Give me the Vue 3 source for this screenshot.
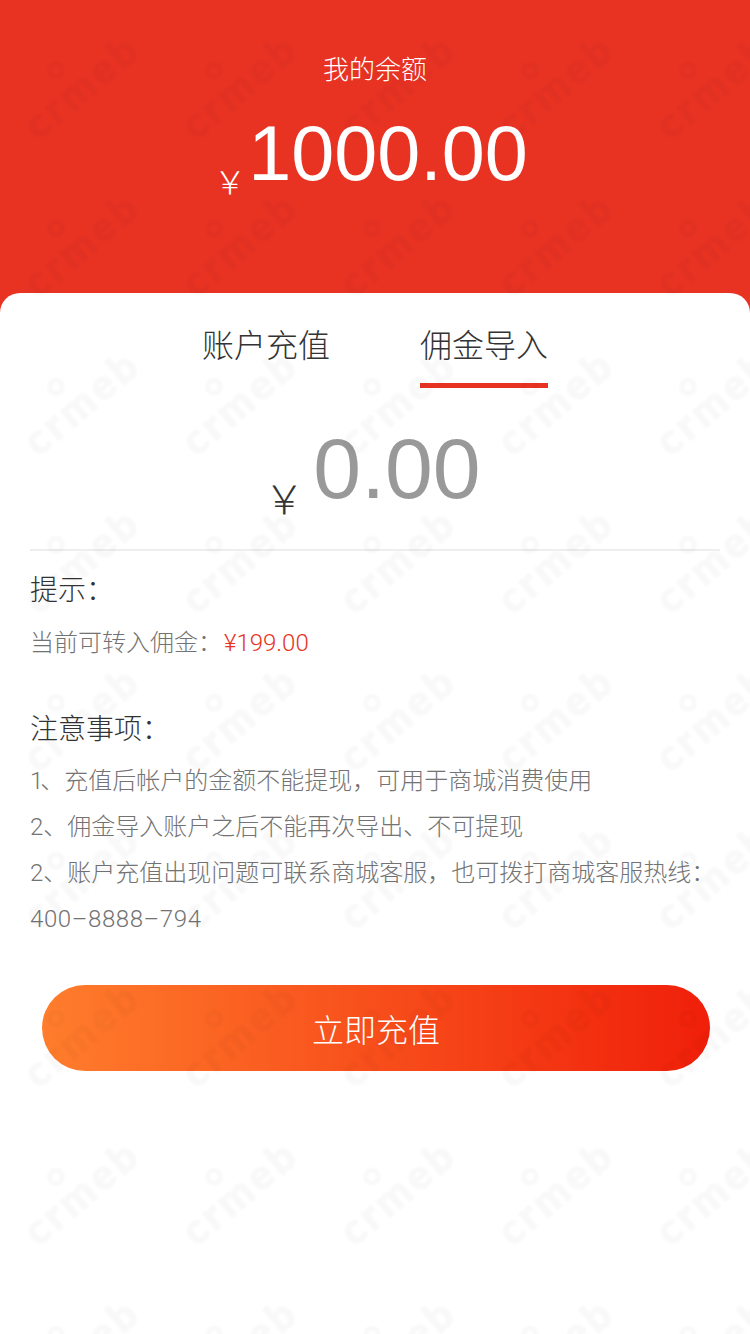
<script setup>
const marks = Array.from({ length: 45 }, (_, i) => i)
</script>

<template>
  <div class="page">
    <header class="hero">
      <div class="hero-label">我的余额</div>
      <div class="hero-amount"><span class="hero-yen">￥</span><span class="hero-num">1000.00</span></div>
    </header>
    <main class="card">
      <nav class="tabs">
        <div class="tab">账户充值</div>
        <div class="tab active">佣金导入</div>
      </nav>
      <div class="amount">
        <span class="amount-yen">￥</span><span class="amount-num">0.00</span>
      </div>
      <section class="tip">
        <h3 class="tip-title">提示：</h3>
        <p class="line">当前可转入佣金：<span class="red">¥199.00</span></p>
      </section>
      <section class="notes">
        <h3 class="tip-title">注意事项：</h3>
        <p class="line"><span class="one">1</span>、充值后帐户的金额不能提现，可用于商城消费使用</p>
        <p class="line">2、佣金导入账户之后不能再次导出、不可提现</p>
        <p class="line">2、账户充值出现问题可联系商城客服，也可拨打商城客服热线：<span class="phone">400–8888–794</span></p>
      </section>
      <button class="submit">立即充值</button>
    </main>
    <div class="wm" aria-hidden="true">
      <div v-for="i in marks" :key="i" class="wm-tile"><span class="wm-text">crmeb<i class="wm-ring"></i></span></div>
    </div>
  </div>
</template>

<style>
html, body { margin: 0; background: #fff; }
</style>

<style scoped>
.page {
  position: relative;
  height: 1334px;
  overflow: hidden;
  background: #e83323;
  font-family: "Liberation Sans", "Noto Sans CJK SC", sans-serif;
  font-weight: 300;
}
.hero { height: 293px; box-sizing: border-box; padding-top: 53px; color: #fff; text-align: center; }
.hero-label { font-size: 26px; line-height: 34px; }
.hero-amount { margin-top: 24px; line-height: 84px; height: 84px; padding-right: 8px; white-space: nowrap; }
.hero-yen { font-size: 32px; margin-right: 2px; vertical-align: -14px; line-height: 1; }
.hero-num { font-size: 77.4px; }
.card {
  height: 1041px;
  background: #fff;
  border-radius: 20px 20px 0 0;
  padding: 0 30px;
  box-sizing: border-box;
}
.tabs { display: flex; justify-content: center; gap: 90px; padding-top: 26px; }
.tab { width: 128px; height: 68px; font-size: 32px; line-height: 54px; color: #333; text-align: center; position: relative; white-space: nowrap; }
.tab.active::after { content: ""; position: absolute; left: 0; right: 0; bottom: -1px; height: 5px; background: #e83323; }
.amount {
  height: 164px;
  box-sizing: border-box;
  border-bottom: 2px solid #eee;
  text-align: center;
  padding: 31px 5px 0 0;
  line-height: 100px;
  white-space: nowrap;
}
.amount-yen { font-size: 40px; color: #333; margin-right: 9px; vertical-align: -16px; line-height: 1; }
.amount-num { font-size: 86px; color: #999; }
.tip { margin-top: 20px; }
.tip-title { margin: 0; font-size: 28px; line-height: 40px; font-weight: 300; color: #333; }
.line {
  margin: 0;
  font-family: Roboto, "Noto Sans CJK SC", sans-serif;
  font-size: 24px;
  line-height: 46px;
  color: #737373;
}
.tip .line { margin-top: 9px; }
.red { color: #e83323; margin-left: 2px; }
.one { letter-spacing: -3px; }
.phone { letter-spacing: 0.6px; }
.notes { margin-top: 44px; }
.notes .tip-title { margin-bottom: 8px; }
.submit {
  display: block;
  width: 668px;
  height: 86px;
  margin: 43px 0 0 12px;
  border: 0;
  border-radius: 43px;
  background: linear-gradient(90deg, #ff7d2c, #f01f0a);
  color: #fff;
  font: inherit;
  font-size: 32px;
}
.wm {
  position: absolute;
  left: 2px;
  top: 6px;
  width: 790px;
  display: grid;
  grid-template-columns: repeat(5, 158px);
  grid-auto-rows: 158px;
  pointer-events: none;
}
.wm-tile { display: flex; align-items: center; justify-content: center; }
.wm-text {
  position: relative;
  display: inline-block;
  font-family: Lato, sans-serif;
  font-weight: 900;
  font-size: 42px;
  line-height: 1;
  letter-spacing: 4px;
  color: #000;
  -webkit-text-stroke: 1.5px #000;
  opacity: 0.022;
  transform: rotate(-40deg);
  filter: blur(1.2px);
}
.wm-ring {
  position: absolute;
  left: calc(50% - 19px);
  top: calc(50% - 36px);
  width: 18px;
  height: 18px;
  box-sizing: border-box;
  border: 5px solid #000;
  border-radius: 50%;
}
</style>
